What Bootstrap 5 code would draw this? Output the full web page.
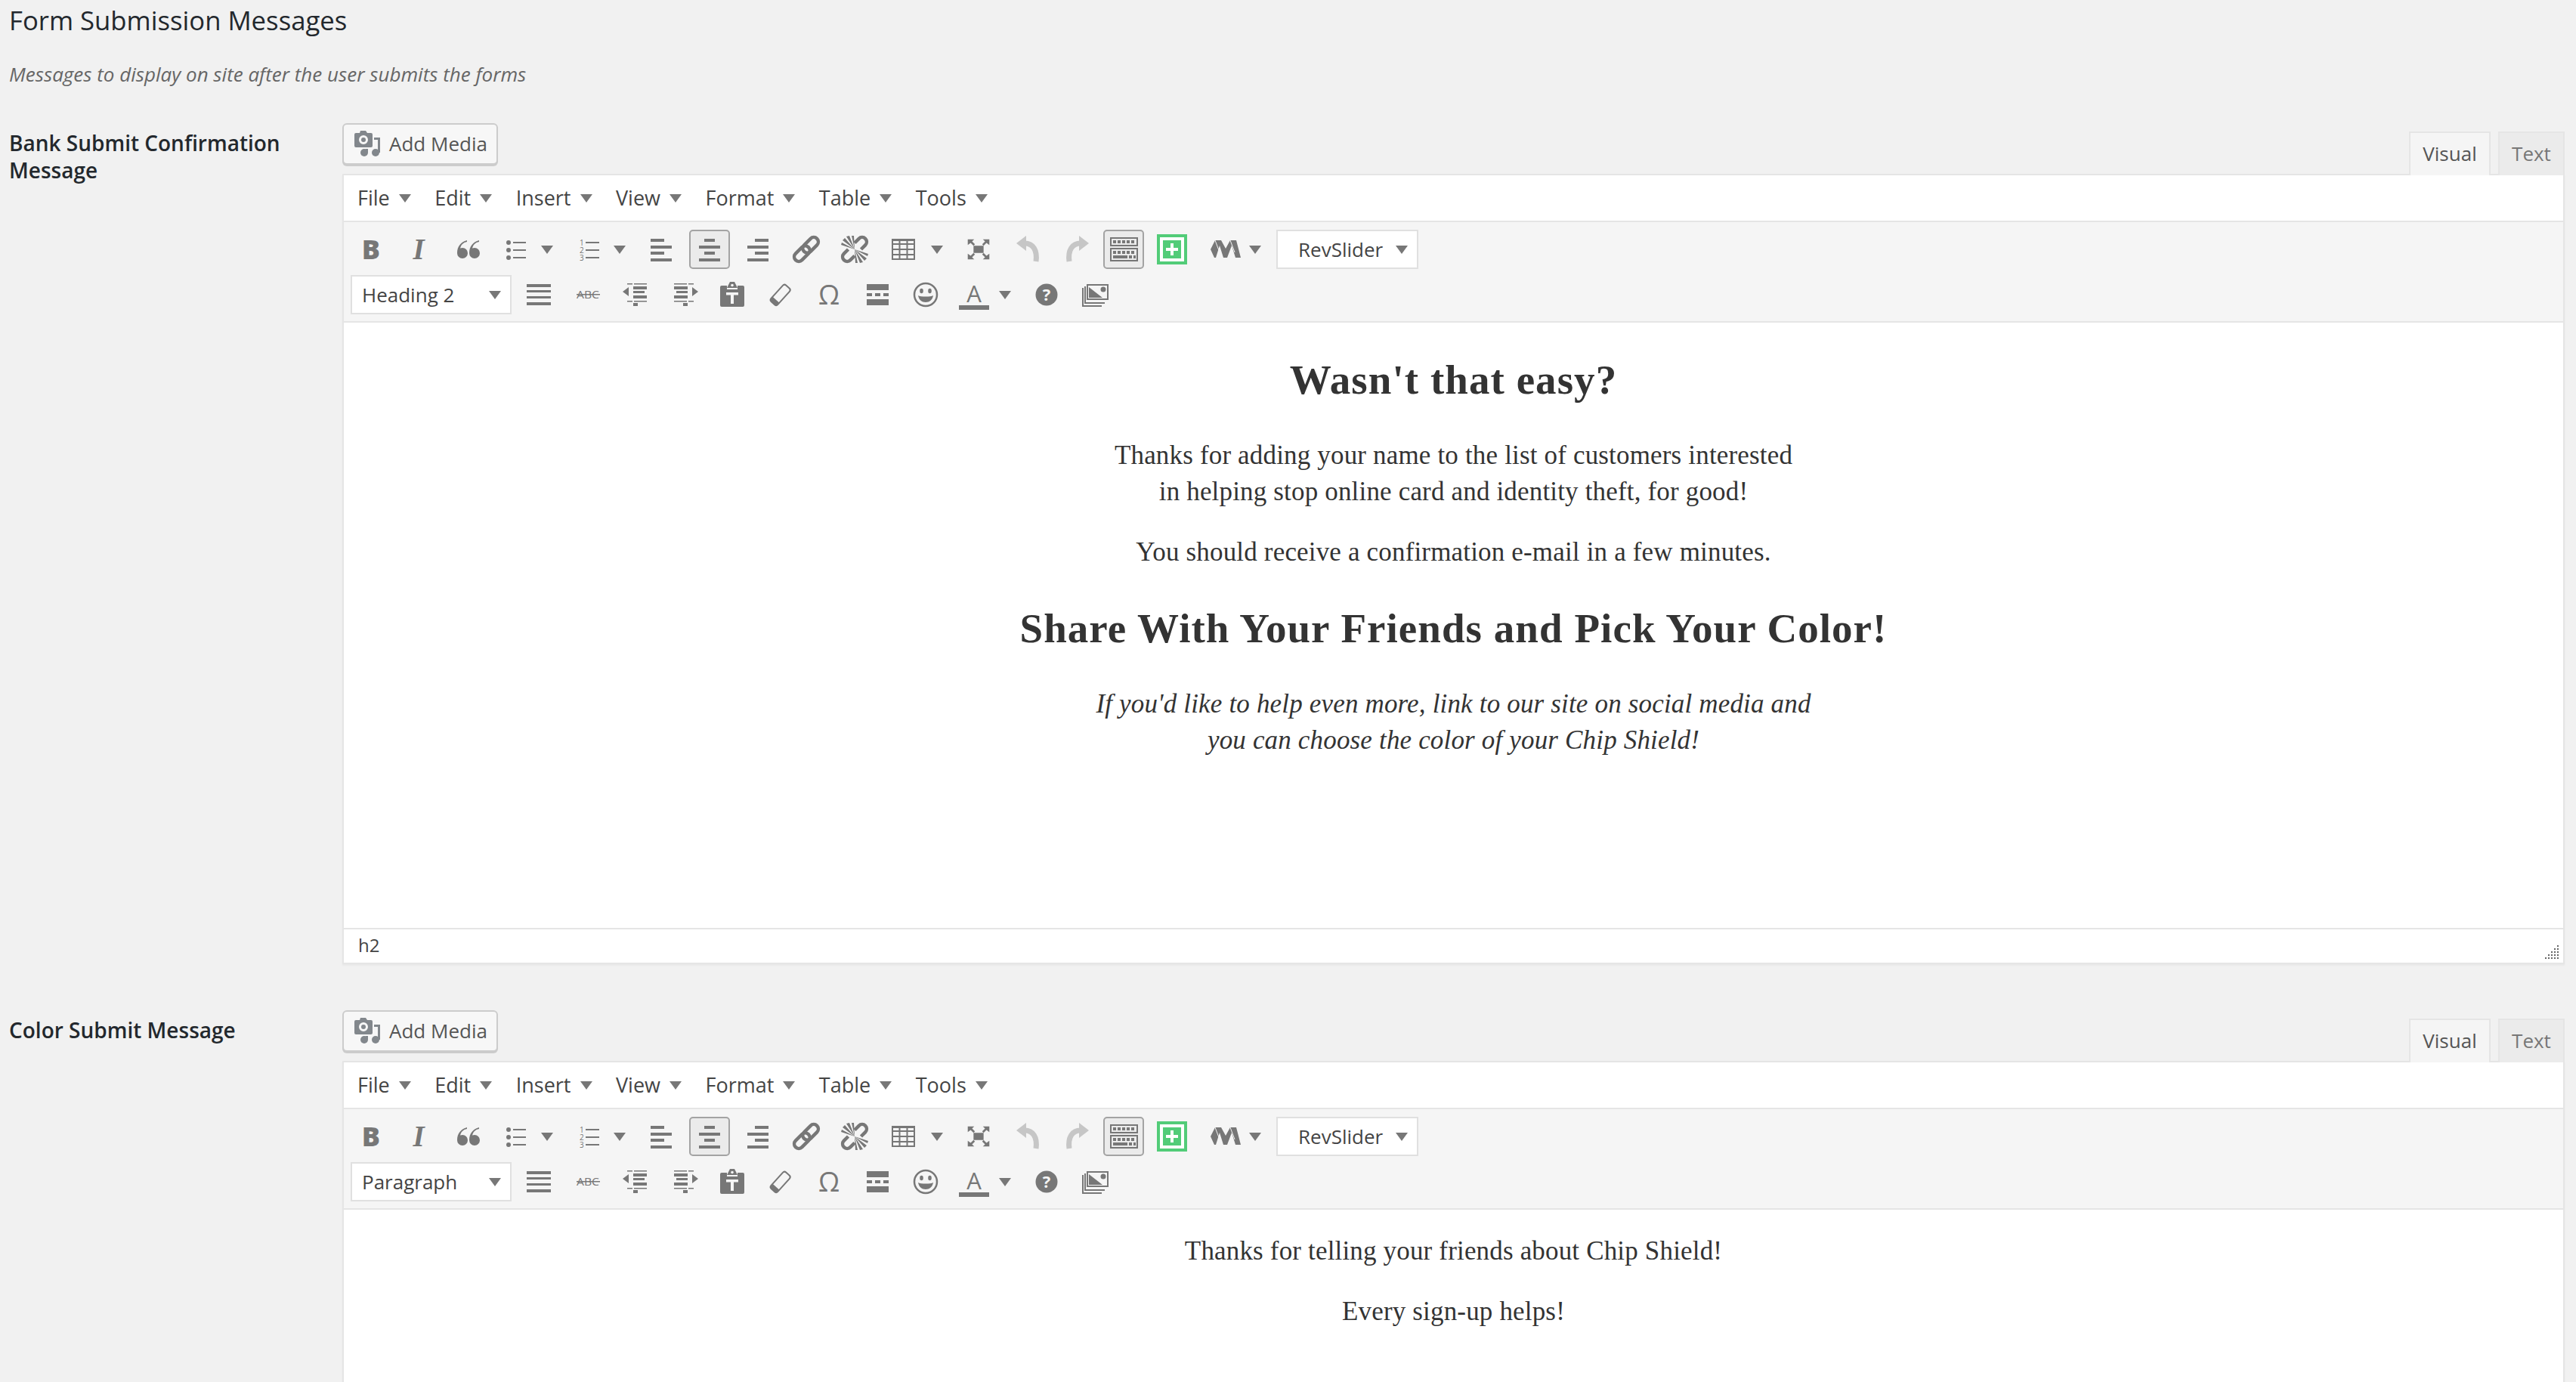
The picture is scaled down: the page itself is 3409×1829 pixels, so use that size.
<!DOCTYPE html>
<html lang="en">
<head>
    <meta charset="UTF-8">
    <title>Form Submission Messages</title>
    <link rel="stylesheet" href="https://cdn.jsdelivr.net/npm/bootstrap@5.3.0/dist/css/bootstrap.min.css">
    <style>
        html, body { height: 1829px; overflow: hidden; }
        body { background: #f1f1f1; font-family: "Open Sans", sans-serif; color: #23282d; }
        .page-wrap { padding: 0 15px 0 12px; }
        .page-title { font-size: 34.700px; line-height: 42px; font-weight: 400; margin: 6px 0 32px; }
        .page-sub { font-size: 26px; line-height: 36px; font-style: italic; color: #666; margin: 0 0 47px; }
        .field-row { margin-bottom: 61px; }
        .field-label { width: 441px; flex: none; font-size: 28px; line-height: 36px; font-weight: 600; padding: 8px 60px 0 0; }
        .media-btn { height: 55px; width: 206px; margin-bottom: 12px; padding: 0 0 0 14px; display: flex; align-items: center; gap: 10px; font-size: 26px; color: #555; background: #f7f7f7; border: 2px solid #ccc; border-radius: 6px; box-shadow: 0 2px 0 #ccc; }
        .media-btn svg { width: 36px; height: 36px; flex: none; }
        .mode-tab { height: 58px; line-height: 54px; font-size: 26px; border: 2px solid #e5e5e5; border-bottom: 0; margin-bottom: -2px; position: relative; text-align: center; }
        .mode-visual { width: 108px; background: #f5f5f5; color: #555; }
        .mode-text { width: 88px; background: #ebebeb; color: #777; margin-left: 10px; }
        .editor-box { border: 2px solid #e5e5e5; background: #fff; box-shadow: 0 2px 2px rgba(0,0,0,.04); }
        .menu-bar { height: 62px; padding-left: 18px; gap: 31.500px; font-size: 27px; color: #444; border-bottom: 2px solid #e5e5e5; }
        .menu-entry { display: flex; align-items: center; gap: 12px; }
        .tip { width: 0; height: 0; flex: none; border-top: 11px solid #777; border-left: 8px solid transparent; border-right: 8px solid transparent; }
        .tool-area { height: 133px; padding-top: 10px; background: #f5f5f5; border-bottom: 2px solid #e5e5e5; }
        .tool-row { height: 52px; margin-bottom: 8px; padding-left: 4px; }
        .tool-row-b { padding-left: 9px; }
        .tool { width: 64px; height: 52px; flex: none; display: flex; align-items: center; justify-content: center; }
        .tool svg { width: 40px; height: 40px; flex: none; }
        .tool-split { width: 96px; justify-content: flex-start; padding-left: 12px; gap: 13px; }
        .tool-table { width: 100px; gap: 17px; }
        .tool-m { width: 106px; padding-left: 19px; gap: 11px; }
        .tool-on { position: relative; }
        .tool-on::before { content: ""; position: absolute; inset: 0 5px 0 5px; background: #ebebeb; border: 2px solid #a3a3a3; border-radius: 5px; }
        .tool-on svg { position: relative; }
        .pick-box { height: 52px; flex: none; background: #fff; border: 2px solid #e0e0e0; display: flex; align-items: center; justify-content: space-between; font-size: 26px; color: #444; }
        .pick-format { width: 213px; padding: 0 12px 0 13px; margin-right: 4px; }
        .pick-slider { width: 188px; padding: 0 12px 0 27px; }
        .editor-body { height: 801px; padding-top: 31px; text-align: center; font-family: "Liberation Serif", serif; font-size: 35px; line-height: 48px; color: #333; letter-spacing: .17px; }
        .editor-body h2 { font-family: inherit; font-size: 55px; line-height: 90px; font-weight: 700; margin: 0 0 31px; letter-spacing: 1.05px; }
        .editor-body p { margin: 0 0 32px; }
        .status-bar { height: 46px; padding: 0 5px 4px 19px; border-top: 2px solid #e5e5e5; font-size: 24px; line-height: 38px; color: #444; }
        .status-bar svg { width: 20px; height: 20px; }
        .g { fill: #777; }
        .s { fill: none; stroke: #777; }
        .w { fill: #f5f5f5; }
        .t { fill: #777; font-family: "Open Sans", sans-serif; }
    </style>
</head>
<body>
    <svg class="d-none" xmlns="http://www.w3.org/2000/svg">
        <symbol id="i-bold" viewBox="0 0 40 40"><text class="t" x="20" y="33" text-anchor="middle" font-size="36" font-weight="800">B</text></symbol>
        <symbol id="i-ital" viewBox="0 0 40 40"><text class="g" x="19" y="33" text-anchor="middle" font-family="Liberation Serif" font-size="39" font-weight="700" font-style="italic">I</text></symbol>
        <symbol id="i-quote" viewBox="0 0 40 40">
            <path class="g" d="M19 8c-8 2-13 8-13 17a7 7 0 1 0 7-7c-1 0-2 .2-3 .6C11 14 14 11 19 10z"/>
            <path class="g" transform="translate(16)" d="M19 8c-8 2-13 8-13 17a7 7 0 1 0 7-7c-1 0-2 .2-3 .6C11 14 14 11 19 10z"/>
        </symbol>
        <symbol id="i-bul" viewBox="0 0 40 40">
            <circle class="g" cx="10" cy="11" r="3"/><circle class="g" cx="10" cy="21" r="3"/><circle class="g" cx="10" cy="31" r="3"/>
            <path class="g" d="M16 10h17v2H16zM16 20h17v2H16zM16 30h17v2H16z"/>
        </symbol>
        <symbol id="i-num" viewBox="0 0 40 40">
            <text class="t" x="8" y="15" font-size="10">1</text><text class="t" x="8" y="25" font-size="10">2</text><text class="t" x="8" y="35" font-size="10">3</text>
            <path class="g" d="M16 10h18v2H16zM16 20h18v2H16zM16 30h18v2H16z"/>
        </symbol>
        <symbol id="i-left" viewBox="0 0 40 40"><path class="g" d="M6 6h18v4H6zM6 15h28v4H6zM6 23h18v4H6zM6 32h28v4H6z"/></symbol>
        <symbol id="i-center" viewBox="0 0 40 40"><path class="g" d="M13 6h14v4H13zM6 15h28v4H6zM13 23h14v4H13zM6 32h28v4H6z"/></symbol>
        <symbol id="i-right" viewBox="0 0 40 40"><path class="g" d="M16 6h18v4H16zM6 15h28v4H6zM16 23h18v4H16zM6 32h28v4H6z"/></symbol>
        <symbol id="i-link" viewBox="0 0 40 40">
            <g transform="rotate(-45 20 20)"><rect class="s" stroke-width="4.5" x="0" y="14" width="24" height="12" rx="6"/><rect class="s" stroke-width="4.5" x="16" y="14" width="24" height="12" rx="6"/></g>
        </symbol>
        <symbol id="i-unlink" viewBox="0 0 40 40">
            <g transform="rotate(-45 20 20)"><path class="s" stroke-width="4.5" d="M14 14H6a6 6 0 0 0 0 12h8M26 14h8a6 6 0 0 1 0 12h-8"/></g>
            <path class="g" d="M20 20L4 8l3-3zM20 20L9 3l4-1zM20 20L16 2h3zM20 20L36 32l-3 3zM20 20L31 37l-4 1zM20 20L24 38h-3zM20 20L2 14l1-3zM20 20L38 26l-1 3z"/>
        </symbol>
        <symbol id="i-table" viewBox="0 0 40 40"><path class="s" stroke-width="2" d="M6 7h29v26H6zM6 13h29M6 20h29M6 27h29M15.5 7v26M25.5 7v26"/><path class="g" d="M5 6h31v3H5z"/></symbol>
        <symbol id="i-full" viewBox="0 0 42 40">
            <path class="g" d="M14 15h14v10H14z"/>
            <path class="g" d="M6 6h9l-3 3 4 4-2 2-4-4-4 3z"/>
            <path class="g" transform="matrix(-1 0 0 1 42 0)" d="M6 6h9l-3 3 4 4-2 2-4-4-4 3z"/>
            <path class="g" transform="matrix(1 0 0 -1 0 40)" d="M6 6h9l-3 3 4 4-2 2-4-4-4 3z"/>
            <path class="g" transform="matrix(-1 0 0 -1 42 40)" d="M6 6h9l-3 3 4 4-2 2-4-4-4 3z"/>
        </symbol>
        <symbol id="i-undo" viewBox="0 0 40 40"><path fill="#c6c6c6" d="M6 12L19 2v20z"/><path fill="none" stroke="#c6c6c6" stroke-width="7" d="M17 12c11 0 17 9 15 24"/></symbol>
        <symbol id="i-redo" viewBox="0 0 40 40"><g transform="matrix(-1 0 0 1 44 0)"><path fill="#c6c6c6" d="M6 12L19 2v20z"/><path fill="none" stroke="#c6c6c6" stroke-width="7" d="M17 12c11 0 17 9 15 24"/></g></symbol>
        <symbol id="i-keys" viewBox="0 0 40 40">
            <rect class="s" stroke-width="2" x="3" y="5" width="35" height="10"/><rect class="s" stroke-width="2" x="3" y="19" width="35" height="16"/>
            <path class="s" stroke-width="4" stroke-dasharray="4 2" d="M6 10h30M6 24h30"/><path class="s" stroke-width="4" d="M6 30h19"/><path class="s" stroke-width="4" stroke-dasharray="4 2" d="M27 30h9"/>
        </symbol>
        <symbol id="i-plus" viewBox="0 0 40 40"><path fill="#52cc78" d="M0 0h40v40H0z"/><path fill="#fff" d="M4 4h32v32H4z"/><path fill="#52cc78" d="M8 8h24v24H8z"/><path fill="#fff" d="M18 12h4v6h6v4h-6v6h-4v-6h-6v-4h6z"/></symbol>
        <symbol id="i-m" viewBox="0 0 40 40">
            <path class="g" d="M0 20L6 8h8l6 11 6-11h8l6 23h-7l-5-16-6 16h-5l-5-16-5 16H5z"/>
            <path fill="none" stroke="#f5f5f5" d="M6 8l6 16M26 8l6 16"/>
        </symbol>
        <symbol id="i-hr" viewBox="0 0 40 40"><path class="g" d="M4 6h32v4H4zM4 14h32v3H4zM4 22h32v3H4zM4 30h32v4H4z"/></symbol>
        <symbol id="i-abc" viewBox="0 0 40 40"><text class="t" x="6" y="25" font-size="14" textLength="30" lengthAdjust="spacingAndGlyphs">ABC</text><path class="g" d="M6 19h31v1.500H6z"/></symbol>
        <symbol id="i-out" viewBox="0 0 40 40">
            <path class="g" d="M3 16l8-6v12zM9 5h7v1.500H9zM18 5h17v1.500H18zM17 9h18v4H17zM17 15h15v3H17zM17 21h18v4H17zM9 28h7v1.500H9zM18 28h17v1.500H18zM17 31h6v4h-6z"/>
        </symbol>
        <symbol id="i-ind" viewBox="0 0 40 40">
            <g transform="matrix(-1 0 0 1 42 0)"><path class="g" d="M3 16l8-6v12zM9 5h7v1.500H9zM18 5h17v1.500H18zM17 9h18v4H17zM17 15h15v3H17zM17 21h18v4H17zM9 28h7v1.500H9zM18 28h17v1.500H18zM17 31h6v4h-6z"/></g>
        </symbol>
        <symbol id="i-paste" viewBox="0 0 40 40">
            <path class="g" d="M6 8h7v5h14V8h7a2 2 0 0 1 2 2v24a2 2 0 0 1-2 2H6a2 2 0 0 1-2-2V10a2 2 0 0 1 2-2zM17 3h6l4 8H13zM12 17h16v3.500h-6V32h-4V20.500h-6z" fill-rule="evenodd"/>
            <circle class="w" cx="20" cy="7.500" r="1.800"/>
        </symbol>
        <symbol id="i-erase" viewBox="0 0 40 40">
            <g transform="rotate(42 20 20)"><rect class="s" stroke-width="2" x="14" y="6" width="12" height="29" rx="3"/><path class="g" d="M14 29h12v3a3 3 0 0 1-3 3h-6a3 3 0 0 1-3-3z"/></g>
        </symbol>
        <symbol id="i-omega" viewBox="0 0 40 40"><text class="t" x="20" y="33" text-anchor="middle" font-size="36">Ω</text></symbol>
        <symbol id="i-more" viewBox="0 0 40 40"><path class="g" d="M6 6h29v8H6zM6 18h7v4H6zM17 18h7v4h-7zM28 18h7v4h-7zM6 26h29v8H6z"/></symbol>
        <symbol id="i-smile" viewBox="0 0 40 40">
            <circle class="s" stroke-width="2.500" cx="20" cy="20" r="15"/><ellipse class="g" cx="14.500" cy="15" rx="2.300" ry="3.300"/><ellipse class="g" cx="25.500" cy="15" rx="2.300" ry="3.300"/>
            <path class="g" d="M10 21c3 2 17 2 20 0-1 6-5 9-10 9s-9-3-10-9z"/>
        </symbol>
        <symbol id="i-color" viewBox="0 0 40 40"><text class="t" x="20" y="30" text-anchor="middle" font-size="31">A</text><path class="g" d="M0 34h40v6H0z"/></symbol>
        <symbol id="i-help" viewBox="0 0 40 40"><circle class="g" cx="20" cy="20" r="14.500"/><text class="w" x="20" y="28" text-anchor="middle" font-family="Open Sans" font-size="22" font-weight="700">?</text></symbol>
        <symbol id="i-gal" viewBox="0 0 40 40">
            <path class="s" stroke-width="2" d="M4 11v24h25M7 9v22h26"/>
            <rect class="w" x="10" y="6" width="28" height="21"/><rect class="s" stroke-width="2" x="10" y="7" width="27" height="19"/>
            <path class="g" d="M12 10l18 14H12z"/><circle class="g" cx="31" cy="13" r="3.500"/>
        </symbol>
        <symbol id="i-media" viewBox="0 0 36 36">
            <path fill="#82878c" fill-rule="evenodd" d="M8 0h7l2 3h5a2 2 0 0 1 2 2v15a2 2 0 0 1-2 2H2a2 2 0 0 1-2-2V5a2 2 0 0 1 2-2h5zM12 6a6 6 0 1 0 0 12 6 6 0 0 0 0-12z"/>
            <circle fill="#82878c" cx="12" cy="12" r="3"/>
            <path fill="#82878c" d="M26 9h8v20h-3V12h-5z"/><circle fill="#82878c" cx="28" cy="29" r="5"/><circle fill="#82878c" cx="13" cy="29" r="5"/><path fill="#82878c" d="M15 24h3v5h-3z"/>
        </symbol>
    </svg>

    <template id="editor-tools">
        <div class="menu-bar d-flex align-items-center">
            <div class="menu-entry">File <i class="tip"></i></div>
            <div class="menu-entry">Edit <i class="tip"></i></div>
            <div class="menu-entry">Insert <i class="tip"></i></div>
            <div class="menu-entry">View <i class="tip"></i></div>
            <div class="menu-entry">Format <i class="tip"></i></div>
            <div class="menu-entry">Table <i class="tip"></i></div>
            <div class="menu-entry">Tools <i class="tip"></i></div>
        </div>
        <div class="tool-area">
            <div class="tool-row d-flex">
                <div class="tool"><svg><use href="#i-bold"/></svg></div>
                <div class="tool"><svg><use href="#i-ital"/></svg></div>
                <div class="tool"><svg><use href="#i-quote"/></svg></div>
                <div class="tool tool-split"><svg><use href="#i-bul"/></svg><i class="tip"></i></div>
                <div class="tool tool-split"><svg><use href="#i-num"/></svg><i class="tip"></i></div>
                <div class="tool"><svg><use href="#i-left"/></svg></div>
                <div class="tool tool-on"><svg><use href="#i-center"/></svg></div>
                <div class="tool"><svg><use href="#i-right"/></svg></div>
                <div class="tool"><svg><use href="#i-link"/></svg></div>
                <div class="tool"><svg><use href="#i-unlink"/></svg></div>
                <div class="tool tool-split tool-table"><svg><use href="#i-table"/></svg><i class="tip"></i></div>
                <div class="tool"><svg><use href="#i-full"/></svg></div>
                <div class="tool"><svg><use href="#i-undo"/></svg></div>
                <div class="tool"><svg><use href="#i-redo"/></svg></div>
                <div class="tool tool-on"><svg><use href="#i-keys"/></svg></div>
                <div class="tool"><svg><use href="#i-plus"/></svg></div>
                <div class="tool tool-split tool-m"><svg><use href="#i-m"/></svg><i class="tip"></i></div>
                <div class="pick-box pick-slider">RevSlider <i class="tip"></i></div>
            </div>
            <div class="tool-row tool-row-b d-flex">
                <div class="pick-box pick-format"><span class="format-name"></span> <i class="tip"></i></div>
                <div class="tool"><svg><use href="#i-hr"/></svg></div>
                <div class="tool"><svg><use href="#i-abc"/></svg></div>
                <div class="tool"><svg><use href="#i-out"/></svg></div>
                <div class="tool"><svg><use href="#i-ind"/></svg></div>
                <div class="tool"><svg><use href="#i-paste"/></svg></div>
                <div class="tool"><svg><use href="#i-erase"/></svg></div>
                <div class="tool"><svg><use href="#i-omega"/></svg></div>
                <div class="tool"><svg><use href="#i-more"/></svg></div>
                <div class="tool"><svg><use href="#i-smile"/></svg></div>
                <div class="tool tool-split"><svg><use href="#i-color"/></svg><i class="tip"></i></div>
                <div class="tool"><svg><use href="#i-help"/></svg></div>
                <div class="tool"><svg><use href="#i-gal"/></svg></div>
            </div>
        </div>
    </template>

    <div class="container-fluid page-wrap">
        <h2 class="page-title">Form Submission Messages</h2>
        <p class="page-sub">Messages to display on site after the user submits the forms</p>

        <!-- Bank submit editor -->
        <div class="field-row d-flex">
            <div class="field-label">Bank Submit Confirmation Message</div>
            <div class="flex-grow-1">
                <div class="d-flex justify-content-between align-items-end">
                    <button type="button" class="btn media-btn"><svg><use href="#i-media"/></svg>Add Media</button>
                    <div class="d-flex">
                        <div class="mode-tab mode-visual">Visual</div>
                        <div class="mode-tab mode-text">Text</div>
                    </div>
                </div>
                <div class="editor-box">
                    <div class="tools-slot" data-format="Heading 2"></div>
                    <div class="editor-body">
                        <h2>Wasn't that easy?</h2>
                        <p>Thanks for adding your name to the list of customers interested<br>in helping stop online card and identity theft, for good!</p>
                        <p>You should receive a confirmation e-mail in a few minutes.</p>
                        <h2>Share With Your Friends and Pick Your Color!</h2>
                        <p><em>If you'd like to help even more, link to our site on social media and<br>you can choose the color of your Chip Shield!</em></p>
                    </div>
                    <div class="status-bar d-flex justify-content-between align-items-end">
                        <span>h2</span>
                        <svg viewBox="0 0 20 20"><path fill="#666" d="M17 1h2v2h-2zM13 5h2v2h-2zM17 5h2v2h-2zM9 9h2v2H9zM13 9h2v2h-2zM17 9h2v2h-2zM5 13h2v2H5zM9 13h2v2H9zM13 13h2v2h-2zM17 13h2v2h-2zM1 17h2v2H1zM5 17h2v2H5zM9 17h2v2H9zM13 17h2v2h-2zM17 17h2v2h-2z"/></svg>
                    </div>
                </div>
            </div>
        </div>

        <!-- Color submit editor -->
        <div class="field-row d-flex">
            <div class="field-label">Color Submit Message</div>
            <div class="flex-grow-1">
                <div class="d-flex justify-content-between align-items-end">
                    <button type="button" class="btn media-btn"><svg><use href="#i-media"/></svg>Add Media</button>
                    <div class="d-flex">
                        <div class="mode-tab mode-visual">Visual</div>
                        <div class="mode-tab mode-text">Text</div>
                    </div>
                </div>
                <div class="editor-box">
                    <div class="tools-slot" data-format="Paragraph"></div>
                    <div class="editor-body">
                        <p>Thanks for telling your friends about Chip Shield!</p>
                        <p>Every sign-up helps!</p>
                    </div>
                </div>
            </div>
        </div>
    </div>

    <script src="https://cdn.jsdelivr.net/npm/bootstrap@5.3.0/dist/js/bootstrap.bundle.min.js"></script>
    <script>
        // both editors share one toolbar
        const tpl = document.getElementById('editor-tools');
        document.querySelectorAll('.tools-slot').forEach(slot => {
            slot.appendChild(tpl.content.cloneNode(true));
            slot.querySelector('.format-name').textContent = slot.dataset.format;
        });
    </script>
</body>
</html>
